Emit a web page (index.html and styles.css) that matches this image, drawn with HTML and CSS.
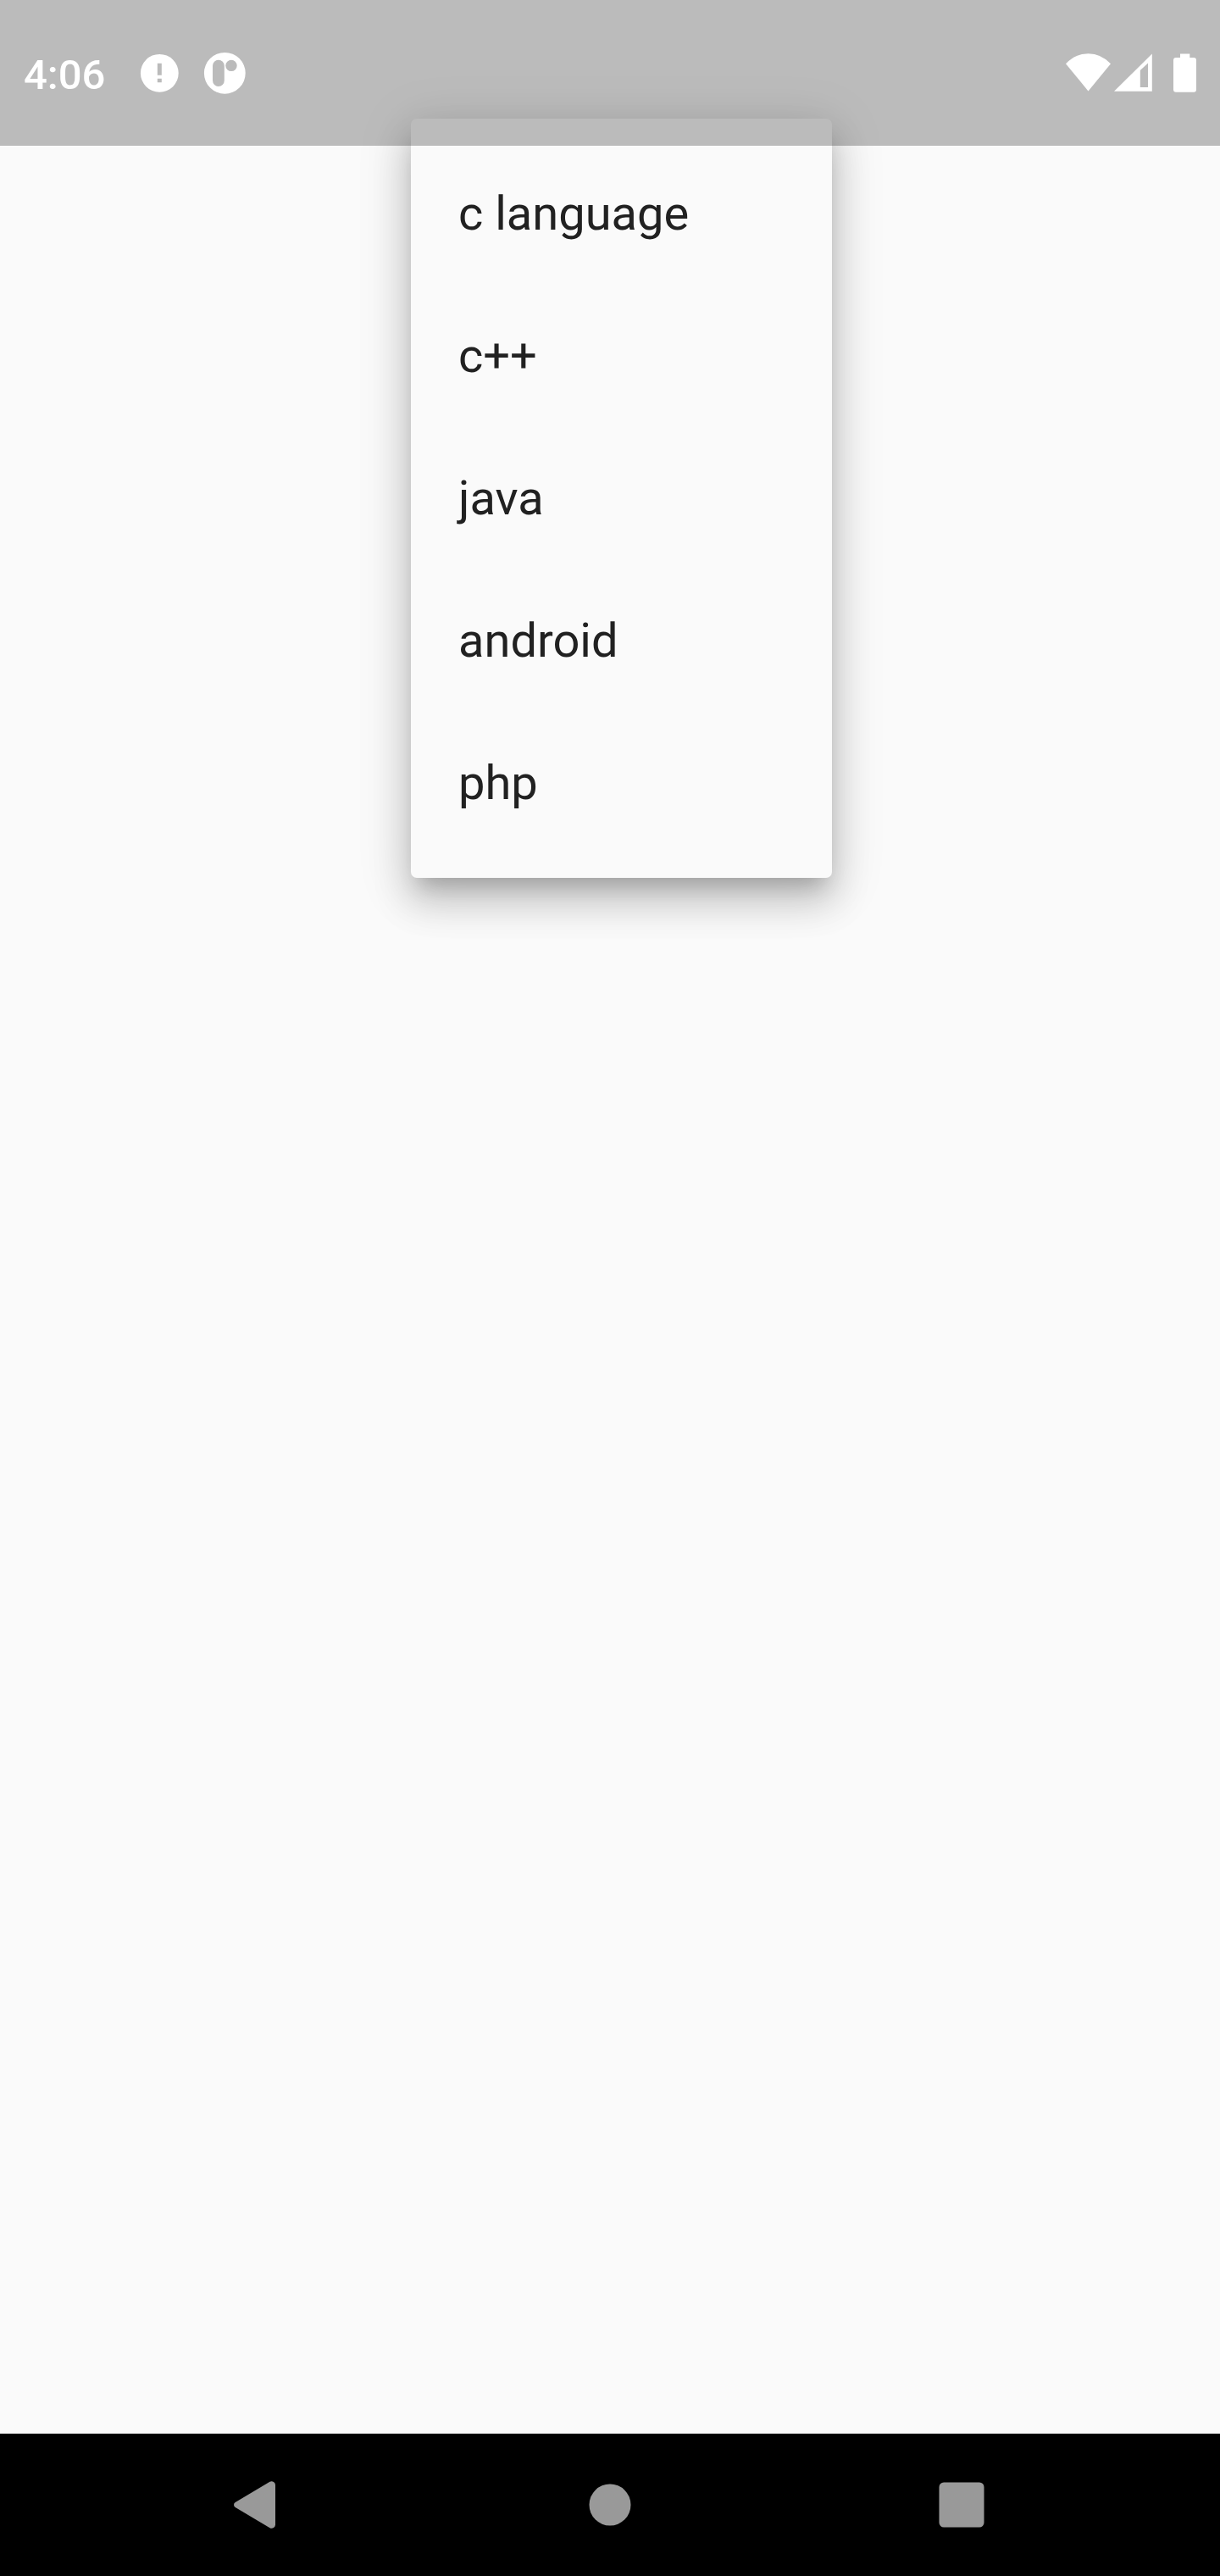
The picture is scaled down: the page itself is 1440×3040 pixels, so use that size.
FILE: index.html
```html
<!DOCTYPE html>
<html lang="en">
<head>
<meta charset="utf-8">
<title>Menu</title>
<link rel="stylesheet" href="styles.css">
</head>
<body>
<div class="screen">
  <header class="status-bar">
    <span class="clock">4:06</span>
    <svg class="icon-alert" viewBox="0 0 46 46"><path fill-rule="evenodd" d="M23.3 .9a22.4 22.4 0 1 0 0 44.8a22.4 22.4 0 1 0 0-44.8zM20.8 11.7h5v14h-5zM20.8 29.7h5v4.5h-5z"/></svg>
    <svg class="icon-app" viewBox="0 0 50 50"><path fill-rule="evenodd" d="M25.3 .9a24.4 24.4 0 1 0 0 48.8a24.4 24.4 0 1 0 0-48.8zM11 16.7a6.9 6.9 0 0 1 13.8 0v17.3a6.9 6.9 0 0 1-13.8 0zM33 9.7a6.7 6.7 0 1 1 0 13.4a6.7 6.7 0 1 1 0-13.4z"/></svg>
    <div class="system-icons">
      <svg class="icon-wifi" viewBox="0 0 53 46"><path d="M0 12.2Q11.5 .2 26.5 .2T53 12.2L26.5 44.4z"/></svg>
      <svg class="icon-signal" viewBox="0 0 45 46"><path fill-rule="evenodd" d="M0 44.8L44.8 .5V44.8zM30.8 20V40.1H40V11.5z"/></svg>
      <svg class="icon-battery" viewBox="0 0 27 46"><path d="M8 .4H19.3V5H24a3 3 0 0 1 3 3V42.8a3 3 0 0 1-3 3H3a3 3 0 0 1-3-3V8a3 3 0 0 1 3-3H8z"/></svg>
    </div>
  </header>
  <main class="content"></main>
  <nav class="nav-bar">
    <svg class="nav-back" viewBox="0 0 49 56"><path d="M1.8 25L42.5 .8Q44.7-.5 47 1Q49 2.3 49 4.5V51.5Q49 53.7 47 55Q44.7 56.5 42.5 55.2L1.8 31Q0 29.9 0 28T1.8 25z"/></svg>
    <svg class="nav-home" viewBox="0 0 50 50"><circle cx="25" cy="25" r="24.5"/></svg>
    <svg class="nav-recent" viewBox="0 0 54 54"><rect x=".5" y=".5" width="53" height="53" rx="5.5"/></svg>
  </nav>
  <ul class="menu">
    <li class="menu-item">c language</li>
    <li class="menu-item">c++</li>
    <li class="menu-item">java</li>
    <li class="menu-item">android</li>
    <li class="menu-item">php</li>
  </ul>
</div>
</body>
</html>
```
FILE: styles.css
```css
* { box-sizing: border-box; }
body {
  margin: 0;
  background: #fafafa;
  font-family: Roboto, sans-serif;
}
.screen {
  position: relative;
  display: flex;
  flex-direction: column;
  width: 1440px;
  height: 3040px;
  overflow: hidden;
}
.status-bar {
  position: relative;
  z-index: 2;
  display: flex;
  align-items: center;
  height: 172px;
  padding: 0 28px;
  background: rgba(0, 0, 0, 0.25);
  color: #fff;
}
.status-bar svg { display: block; fill: #fff; }
.clock {
  width: 137px;
  font-size: 49px;
  font-weight: 500;
  line-height: 57px;
  padding-top: 5px;
}
.icon-alert { width: 46px; height: 46px; margin-right: 29px; overflow: visible; }
.icon-app { width: 50px; height: 50px; }
.system-icons { display: flex; margin-left: auto; }
.icon-wifi { width: 53px; height: 46px; margin-right: 4px; }
.icon-signal { width: 45px; height: 46px; margin-right: 25px; }
.icon-battery { width: 27px; height: 46px; }
.content { flex: 1; }
.nav-bar {
  display: flex;
  align-items: center;
  height: 168px;
  padding-left: 276px;
  background: #000;
  fill: #999;
}
.nav-back { width: 49px; height: 56px; }
.nav-home { width: 50px; height: 50px; margin-left: 370px; }
.nav-recent { width: 54px; height: 54px; margin-left: 363px; }
.menu {
  position: absolute;
  z-index: 1;
  top: 140px;
  left: 485px;
  width: 497px;
  margin: 0;
  padding: 28px 0;
  list-style: none;
  border-radius: 7px;
  background: #fafafa;
  /* Material elevation 8: umbra, penumbra, ambient */
  box-shadow:
    0 17.5px 23.7px -10.5px rgba(0, 0, 0, 0.2),
    0 28px 43.9px 3.5px rgba(0, 0, 0, 0.14),
    0 10.5px 60px 7px rgba(0, 0, 0, 0.12);
}
.menu-item {
  height: 168px;
  padding: 0 56px;
  font-size: 56px;
  line-height: 168px;
  color: #212121;
}
```
